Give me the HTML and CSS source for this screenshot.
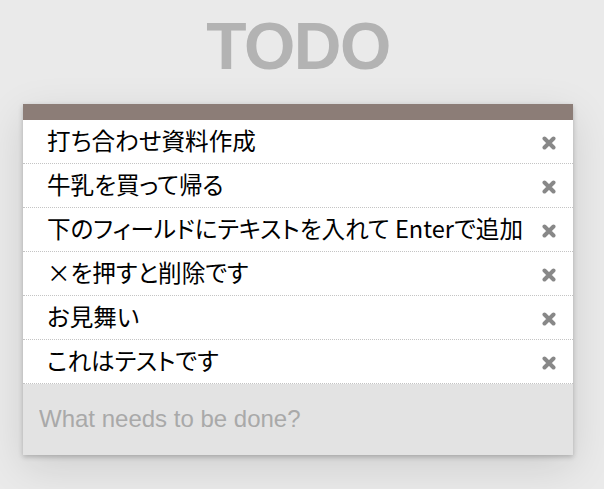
FILE: index.html
```
<!DOCTYPE html>
<html lang="ja">
<head>
<meta charset="utf-8">
<title>TODO</title>
<link rel="stylesheet" href="styles.css">
</head>
<body>
<div class="app">
  <h1 class="title">TODO</h1>
  <section class="card">
    <div class="card-bar"></div>
    <ul class="todo-list">
      <li class="todo"><span class="todo-text">打ち合わせ資料作成</span><span class="todo-del"><svg viewBox="0 0 14 14" width="14" height="14"><path d="M2.5 2.5L11.5 11.5M11.5 2.5L2.5 11.5" stroke="#888" stroke-width="4" stroke-linecap="round"/></svg></span></li>
      <li class="todo"><span class="todo-text">牛乳を買って帰る</span><span class="todo-del"><svg viewBox="0 0 14 14" width="14" height="14"><path d="M2.5 2.5L11.5 11.5M11.5 2.5L2.5 11.5" stroke="#888" stroke-width="4" stroke-linecap="round"/></svg></span></li>
      <li class="todo"><span class="todo-text">下のフィールドにテキストを入れて Enterで追加</span><span class="todo-del"><svg viewBox="0 0 14 14" width="14" height="14"><path d="M2.5 2.5L11.5 11.5M11.5 2.5L2.5 11.5" stroke="#888" stroke-width="4" stroke-linecap="round"/></svg></span></li>
      <li class="todo"><span class="todo-text">×を押すと削除です</span><span class="todo-del"><svg viewBox="0 0 14 14" width="14" height="14"><path d="M2.5 2.5L11.5 11.5M11.5 2.5L2.5 11.5" stroke="#888" stroke-width="4" stroke-linecap="round"/></svg></span></li>
      <li class="todo"><span class="todo-text">お見舞い</span><span class="todo-del"><svg viewBox="0 0 14 14" width="14" height="14"><path d="M2.5 2.5L11.5 11.5M11.5 2.5L2.5 11.5" stroke="#888" stroke-width="4" stroke-linecap="round"/></svg></span></li>
      <li class="todo"><span class="todo-text">これはテストです</span><span class="todo-del"><svg viewBox="0 0 14 14" width="14" height="14"><path d="M2.5 2.5L11.5 11.5M11.5 2.5L2.5 11.5" stroke="#888" stroke-width="4" stroke-linecap="round"/></svg></span></li>
    </ul>
    <div class="new-todo-wrap">
      <input class="new-todo" type="text" placeholder="What needs to be done?">
    </div>
  </section>
</div>
</body>
</html>
```

FILE: styles.css
```
html, body {
  margin: 0;
  padding: 0;
  background: #eaeaea;
  min-height: 100%;
}
html {
  height: 100%;
}
body {
  font-family: "Liberation Sans", Arial, sans-serif;
}
.app {
  width: 550px;
  padding: 12px 0 40px 23px;
}
.title {
  margin: 0 0 24px 0;
  font-family: "Liberation Sans", Arial, sans-serif;
  font-size: 66px;
  line-height: 68px;
  font-weight: bold;
  color: #b3b3b3;
  text-align: center;
  letter-spacing: -1.5px;
}
.card {
  background: #fff;
  box-shadow: 0 2px 5px rgba(0,0,0,0.22), 0 12px 40px rgba(0,0,0,0.12);
}
.card-bar {
  height: 16px;
  background: #8c7d77;
}
.todo-list {
  list-style: none;
  margin: 0;
  padding: 0;
}
.todo {
  display: flex;
  align-items: center;
  height: 43px;
  border-bottom: 1px dotted #c4c4c4;
  padding: 0 17px 0 24px;
}
.todo-text {
  flex: 1;
  font-family: "Noto Sans CJK JP", sans-serif;
  font-feature-settings: "palt";
  font-size: 23.6px;
  line-height: 30px;
  margin-top: -3px;
  color: #000;
  white-space: nowrap;
}
.todo-del {
  display: flex;
  width: 14px;
  height: 14px;
  margin-top: 2px;
}
.new-todo-wrap {
  background: #e3e3e3;
  height: 71px;
  display: flex;
  align-items: center;
  padding: 0 16px;
}
.new-todo {
  flex: 1;
  border: none;
  outline: none;
  background: transparent;
  padding: 0;
  margin: 0 0 1px 0;
  font-family: "Liberation Sans", Arial, sans-serif;
  font-size: 24px;
  color: #333;
}
.new-todo::placeholder {
  color: #a9a9a9;
}
```
